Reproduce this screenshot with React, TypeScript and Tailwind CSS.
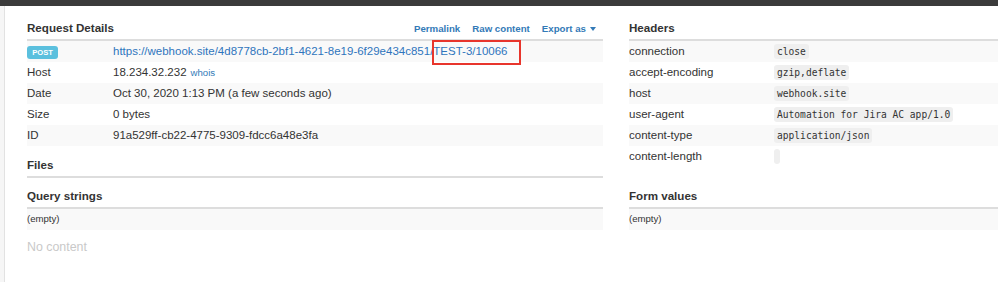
import React from 'react'

// Webhook request inspector view

const details = [
  { key: 'Host', value: '18.234.32.232', whois: true },
  { key: 'Date', value: 'Oct 30, 2020 1:13 PM (a few seconds ago)' },
  { key: 'Size', value: '0 bytes' },
  { key: 'ID', value: '91a529ff-cb22-4775-9309-fdcc6a48e3fa' },
]

const headers = [
  { key: 'connection', value: 'close' },
  { key: 'accept-encoding', value: 'gzip,deflate' },
  { key: 'host', value: 'webhook.site' },
  { key: 'user-agent', value: 'Automation for Jira AC app/1.0' },
  { key: 'content-type', value: 'application/json' },
  { key: 'content-length', value: '' },
]

const SectionTitle = ({ title, children }: { title: string; children?: React.ReactNode }) => (
  <div className="flex items-end justify-between border-b-2 border-[#dddddd] pb-[4px]">
    <h3 className="text-[11.6px] font-bold leading-[14px] text-[#333]">{title}</h3>
    {children}
  </div>
)

const EmptyRow = () => (
  <div className="flex h-[21px] items-center bg-[#f9f9f9] text-[9.6px] text-[#333]">(empty)</div>
)

export default function App() {
  return (
    <div className="relative h-[282px] w-[998px] overflow-hidden bg-white font-['Liberation_Sans',Arial,sans-serif] text-[#333]">
      <div className="h-[6px] bg-[#3b3b3b]" />
      <div className="flex h-[276px]">
        <div className="w-[5px] shrink-0 border-r border-[#e2e2e2] bg-[#f6f6f6]" />

        {/* left column */}
        <div className="ml-[22px] w-[576px] shrink-0">
          <div className="pt-[15px]">
            <SectionTitle title="Request Details">
              <div className="mr-[7px] flex gap-[12px] text-[9.7px] font-bold leading-[12px] text-[#337ab7]">
                <span>Permalink</span>
                <span>Raw content</span>
                <span className="flex items-center gap-[4px]">
                  Export as
                  <span className="h-0 w-0 border-x-[3.5px] border-t-[4px] border-x-transparent border-t-[#337ab7]" />
                </span>
              </div>
            </SectionTitle>
          </div>

          <div className="text-[11.5px]">
            <div className="relative flex h-[21px] items-center bg-[#f9f9f9]">
              <div className="w-[86px] shrink-0">
                <span className="inline-flex h-[13px] w-[31px] items-center justify-center rounded-[3px] bg-[#5bc0de] text-[7.6px] font-bold text-white">
                  POST
                </span>
              </div>
              <span className="pt-px text-[#2f75bd]">
                https://webhook.site/4d8778cb-2bf1-4621-8e19-6f29e434c851/TEST-3/10066
              </span>
              <div className="absolute left-[405px] top-[-1px] h-[25px] w-[89px] border-2 border-[#e8352c]" />
            </div>
            {details.map((row, i) => (
              <div
                key={row.key}
                className={`flex h-[21px] items-center pt-px ${i % 2 === 1 ? 'bg-[#f9f9f9]' : ''}`}
              >
                <div className="w-[86px] shrink-0">{row.key}</div>
                <div>
                  {row.value}
                  {row.whois && <span className="ml-[4px] text-[9.6px] text-[#337ab7]">whois</span>}
                </div>
              </div>
            ))}
          </div>

          <div className="mt-[12px]">
            <SectionTitle title="Files" />
          </div>
          <div className="mt-[11px]">
            <SectionTitle title="Query strings" />
          </div>
          <EmptyRow />
          <div className="mt-[8px] text-[12.4px] text-[#c9c9c9]">No content</div>
        </div>

        {/* right column */}
        <div className="ml-[26px] flex-1">
          <div className="pt-[15px]">
            <SectionTitle title="Headers" />
          </div>
          <div className="text-[11.5px]">
            {headers.map((row, i) => (
              <div
                key={row.key}
                className={`flex h-[21px] items-center ${i % 2 === 0 ? 'bg-[#f9f9f9]' : ''}`}
              >
                <div className="w-[145px] shrink-0">{row.key}</div>
                <code className="inline-block h-[15px] min-w-[6px] rounded-[3px] bg-[#efefef] px-[3px] font-['DejaVu_Sans_Mono',monospace] text-[9.6px] leading-[15px] text-[#333]">
                  {row.value}
                </code>
              </div>
            ))}
          </div>
          <div className="mt-[22px]">
            <SectionTitle title="Form values" />
          </div>
          <EmptyRow />
        </div>
      </div>
    </div>
  )
}
